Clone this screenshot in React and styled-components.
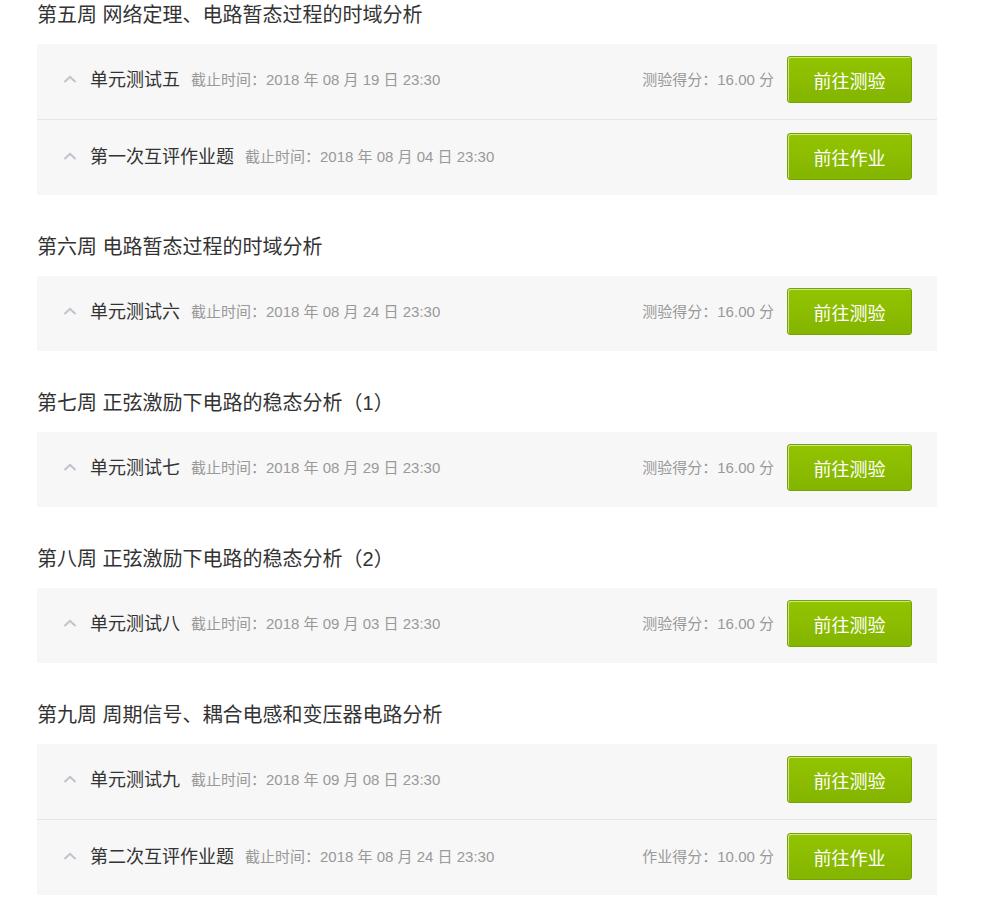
import styled, { createGlobalStyle } from 'styled-components';

const GlobalStyle = createGlobalStyle`
  body {
    margin: 0;
    background: #fff;
    font-family: "Liberation Sans", "Noto Sans CJK SC", sans-serif;
  }
`;

const weeks = [
  {
    title: '第五周 网络定理、电路暂态过程的时域分析',
    items: [
      { name: '单元测试五', deadline: '2018 年 08 月 19 日 23:30', score: '测验得分：16.00 分', action: '前往测验' },
      { name: '第一次互评作业题', deadline: '2018 年 08 月 04 日 23:30', action: '前往作业' },
    ],
  },
  {
    title: '第六周 电路暂态过程的时域分析',
    items: [
      { name: '单元测试六', deadline: '2018 年 08 月 24 日 23:30', score: '测验得分：16.00 分', action: '前往测验' },
    ],
  },
  {
    title: '第七周 正弦激励下电路的稳态分析（1）',
    items: [
      { name: '单元测试七', deadline: '2018 年 08 月 29 日 23:30', score: '测验得分：16.00 分', action: '前往测验' },
    ],
  },
  {
    title: '第八周 正弦激励下电路的稳态分析（2）',
    items: [
      { name: '单元测试八', deadline: '2018 年 09 月 03 日 23:30', score: '测验得分：16.00 分', action: '前往测验' },
    ],
  },
  {
    title: '第九周 周期信号、耦合电感和变压器电路分析',
    items: [
      { name: '单元测试九', deadline: '2018 年 09 月 08 日 23:30', action: '前往测验' },
      { name: '第二次互评作业题', deadline: '2018 年 08 月 24 日 23:30', score: '作业得分：10.00 分', action: '前往作业' },
    ],
  },
];

function Chevron() {
  return (
    <svg width="14" height="8" viewBox="0 0 14 8">
      <path d="M1.5 7 L7 1.8 L12.5 7" fill="none" stroke="#bcc3cb" strokeWidth="2" />
    </svg>
  );
}

export default function App() {
  return (
    <>
      <GlobalStyle />
      <Page>
        {weeks.map((week) => (
          <Week key={week.title}>
            <WeekTitle>{week.title}</WeekTitle>
            <Panel>
              {week.items.map((item) => (
                <Row key={item.name}>
                  <Toggle><Chevron /></Toggle>
                  <ItemName>{item.name}</ItemName>
                  <Deadline>截止时间：{item.deadline}</Deadline>
                  {item.score ? <Score>{item.score}</Score> : null}
                  <GoButton>{item.action}</GoButton>
                </Row>
              ))}
            </Panel>
          </Week>
        ))}
      </Page>
    </>
  );
}

const Page = styled.main`
  width: 900px;
  padding: 1px 0 0 37px;
  display: flex;
  flex-direction: column;
  gap: 38px;
`;

const Week = styled.section`
  display: flex;
  flex-direction: column;
  gap: 13px;
`;

const WeekTitle = styled.h2`
  margin: 0;
  font-size: 20px;
  line-height: 28px;
  height: 30px;
  font-weight: 400;
  color: #333;
`;

const Panel = styled.div`
  background: #f7f7f7;
  display: flex;
  flex-direction: column;
`;

const Row = styled.div`
  height: 75px;
  box-sizing: border-box;
  display: flex;
  align-items: center;
  padding: 0 25px 4px 26px;
  & + & {
    height: 76px;
    padding-bottom: 2px;
    border-top: 1px solid #e6e6e6;
  }
`;

const Toggle = styled.span`
  width: 14px;
  height: 8px;
  display: flex;
  margin-right: 13px;
  margin-top: -2px;
`;

const ItemName = styled.span`
  font-size: 18px;
  line-height: 24px;
  color: #333;
  margin-right: 11px;
`;

const Deadline = styled.span`
  font-size: 15px;
  line-height: 20px;
  color: #999;
  flex: 1;
`;

const Score = styled.span`
  font-size: 15px;
  line-height: 20px;
  color: #999;
  margin-right: 13px;
`;

const GoButton = styled.button`
  width: 125px;
  height: 47px;
  border: 1px solid #77a300;
  border-radius: 3px;
  background: linear-gradient(#93c400, #84b500);
  box-shadow: inset 1px 1px 0 rgba(255, 255, 255, 0.55);
  color: #fff;
  font-family: inherit;
  font-size: 18px;
  cursor: pointer;
`;
